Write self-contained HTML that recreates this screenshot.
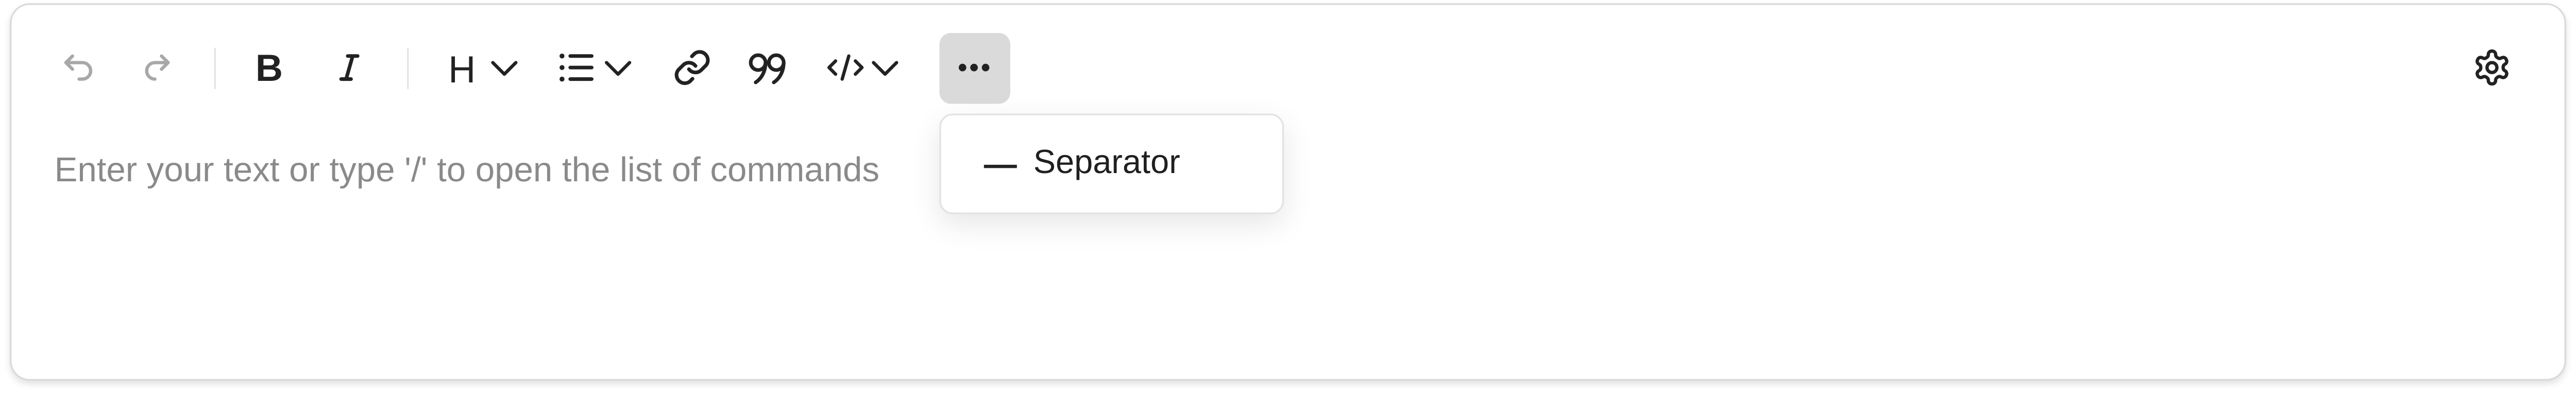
<!DOCTYPE html>
<html><head><meta charset="utf-8">
<style>
html,body{margin:0;padding:0;background:#fff;width:5152px;height:796px;overflow:hidden}
#s{position:absolute;left:0;top:0;width:1568px;height:243px;transform:scale(3.199);transform-origin:0 0;font-family:"Liberation Sans",Arial,sans-serif}
.card{position:absolute;left:6px;top:2px;width:1549px;height:227px;border:1px solid #d9d9d9;border-radius:12px;box-shadow:0 2px 4px rgba(0,0,0,.12);background:#fff}
.ic{position:absolute;top:29px}
.sep{position:absolute;top:29px;width:1px;height:25px;background:#e3e3e3}
.more{position:absolute;left:570px;top:20px;width:43px;height:43px;border-radius:7px;background:#dadada}
.ph{position:absolute;left:33px;top:92px;font-size:21px;color:#8a8a8a;white-space:nowrap}
.dd{position:absolute;left:570px;top:69px;width:207px;height:59px;border:1px solid #e2e2e2;border-radius:8px;background:#fff;box-shadow:0 6px 18px rgba(0,0,0,.10)}
.dd .dash{position:absolute;left:26px;top:30px;width:20px;height:2px;background:#222}
.dd .t{position:absolute;left:56px;top:18px;font-size:20.3px;color:#1f1f1f}
</style></head><body>
<div id="s">
<div class="card"></div>
<svg class="ic" style="left:36px" width="24" height="24" viewBox="0 0 24 24" fill="none" stroke="#a8a8a8" stroke-width="2" stroke-linecap="round" stroke-linejoin="round"><path d="M8 5L4 9l4 4"/><path d="M4 9h10a5 5 0 0 1 0 10h-2"/></svg>
<svg class="ic" style="left:82px" width="24" height="24" viewBox="0 0 24 24" fill="none" stroke="#a8a8a8" stroke-width="2" stroke-linecap="round" stroke-linejoin="round"><path d="M16 5l4 4-4 4"/><path d="M20 9H12a5 5 0 0 0 0 10h0"/></svg>
<div class="sep" style="left:130px"></div>
<div style="position:absolute;left:155px;top:28px;font-size:23px;font-weight:bold;color:#222">B</div>
<svg class="ic" style="left:200px" width="24" height="24" viewBox="0 0 24 24" fill="none" stroke="#222" stroke-width="2.2" stroke-linecap="round"><path d="M11 5h6M7 19h6M14 5l-4 14"/></svg>
<div class="sep" style="left:247px"></div>
<div style="position:absolute;left:272px;top:29px;font-size:23px;color:#222">H</div>
<svg class="ic" style="left:296px;top:31px" width="20" height="20" viewBox="0 0 20 20" fill="none" stroke="#222" stroke-width="2" stroke-linecap="round" stroke-linejoin="round"><path d="M3 7l7 7 7-7"/></svg>
<svg class="ic" style="left:338px" width="24" height="24" viewBox="0 0 24 24" fill="none" stroke="#222" stroke-width="2.2" stroke-linecap="round"><path d="M8 5h13M8 12h13M8 19h13"/><path d="M3 5h.01M3 12h.01M3 19h.01" stroke-width="3"/></svg>
<svg class="ic" style="left:365px;top:31px" width="20" height="20" viewBox="0 0 20 20" fill="none" stroke="#222" stroke-width="2" stroke-linecap="round" stroke-linejoin="round"><path d="M3 7l7 7 7-7"/></svg>
<svg class="ic" style="left:408px" width="24" height="24" viewBox="0 0 24 24" fill="none" stroke="#222" stroke-width="2.2" stroke-linecap="round"><path d="M10 13a5 5 0 0 0 7.5.5l3-3a5 5 0 0 0-7-7l-1.7 1.7"/><path d="M14 11a5 5 0 0 0-7.5-.5l-3 3a5 5 0 0 0 7 7l1.7-1.7"/></svg>
<svg class="ic" style="left:453px" width="26" height="24" viewBox="0 0 26 24" fill="none" stroke="#222" stroke-width="2.2" stroke-linecap="round"><circle cx="7" cy="9" r="4.5"/><path d="M11.5 9c0 6-3 10-6 12"/><circle cx="18" cy="9" r="4.5"/><path d="M22.5 9c0 6-3 10-6 12"/></svg>
<svg class="ic" style="left:500px" width="26" height="24" viewBox="0 0 26 24" fill="none" stroke="#222" stroke-width="2" stroke-linecap="round" stroke-linejoin="round"><path d="M7 8l-4 4 4 4M19 8l4 4-4 4M15 5l-4 14"/></svg>
<svg class="ic" style="left:527px;top:31px" width="20" height="20" viewBox="0 0 20 20" fill="none" stroke="#222" stroke-width="2" stroke-linecap="round" stroke-linejoin="round"><path d="M3 7l7 7 7-7"/></svg>
<div class="more"></div>
<svg style="position:absolute;left:579px;top:35px" width="24" height="12" viewBox="0 0 24 12" fill="#222"><circle cx="5" cy="6" r="2.3"/><circle cx="12" cy="6" r="2.3"/><circle cx="19" cy="6" r="2.3"/></svg>
<svg class="ic" style="left:1500px" width="24" height="24" viewBox="0 0 24 24" fill="none" stroke="#222" stroke-width="2" stroke-linejoin="round"><path d="M12.2 2h-.4a2 2 0 0 0-2 2v.2a2 2 0 0 1-1 1.7l-.4.3a2 2 0 0 1-2 0l-.2-.1a2 2 0 0 0-2.7.7l-.2.4a2 2 0 0 0 .7 2.7l.2.1a2 2 0 0 1 1 1.7v.5a2 2 0 0 1-1 1.7l-.2.1a2 2 0 0 0-.7 2.7l.2.4a2 2 0 0 0 2.7.7l.2-.1a2 2 0 0 1 2 0l.4.3a2 2 0 0 1 1 1.7v.2a2 2 0 0 0 2 2h.4a2 2 0 0 0 2-2v-.2a2 2 0 0 1 1-1.7l.4-.3a2 2 0 0 1 2 0l.2.1a2 2 0 0 0 2.7-.7l.2-.4a2 2 0 0 0-.7-2.7l-.2-.1a2 2 0 0 1-1-1.7v-.5a2 2 0 0 1 1-1.7l.2-.1a2 2 0 0 0 .7-2.7l-.2-.4a2 2 0 0 0-2.7-.7l-.2.1a2 2 0 0 1-2 0l-.4-.3a2 2 0 0 1-1-1.7V4a2 2 0 0 0-2-2z"/><circle cx="12" cy="12" r="3"/></svg>
<div class="ph">Enter your text or type '/' to open the list of commands</div>
<div class="dd"><div class="dash"></div><div class="t">Separator</div></div>
</div>
</body></html>
